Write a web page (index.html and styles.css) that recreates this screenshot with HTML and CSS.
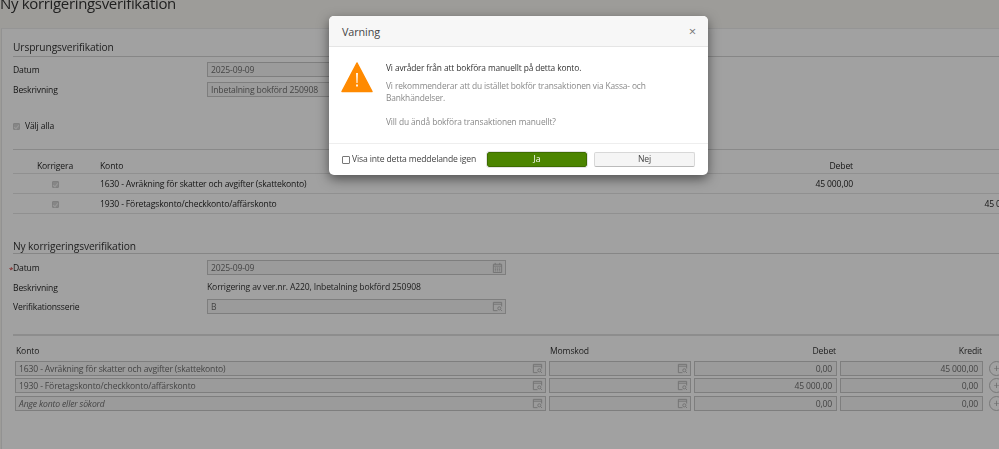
FILE: index.html
```html
<!DOCTYPE html>
<html lang="sv">
<head>
<meta charset="utf-8">
<title>Ny korrigeringsverifikation</title>
<link rel="stylesheet" href="styles.css">
</head>
<body>
<svg class="defs" width="0" height="0" aria-hidden="true">
  <symbol id="cal" viewBox="0 0 12 12"><path d="M1.5 2.5h9v9h-9zM1.5 4.5h9M3.5 1v2M8.5 1v2M3 6.5h1.500M5.300 6.500h1.500M7.600 6.500H9M3 8h1.500M5.300 8h1.500M7.600 8H9M3 9.700h1.500M5.300 9.700h1.500M7.600 9.700H9" fill="none" stroke="currentColor"/></symbol>
  <symbol id="look" viewBox="0 0 12 12"><path d="M6 10.500H1.500v-9h9V6M1.500 3.500h9" fill="none" stroke="currentColor"/><circle cx="8" cy="8" r="1.700" fill="none" stroke="currentColor"/><path d="M9.300 9.300l1.600 1.600" stroke="currentColor"/></symbol>
</svg>
<div class="page">
  <h1 class="title">Ny korrigeringsverifikation</h1>
  <main class="panel">
    <h2 class="heading first">Ursprungsverifikation</h2>
    <div class="form-row"><span class="label">Datum</span><span class="field w-date">2025-09-09</span></div>
    <div class="form-row"><span class="label">Beskrivning</span><span class="field w-date">Inbetalning bokförd 250908</span></div>
    <div class="check-all"><span class="check"></span>Välj alla</div>
    <div class="orig-table">
      <div class="orig-row head"><span class="c-center">Korrigera</span><span>Konto</span><span class="c-right">Debet</span><span class="c-right">Kredit</span></div>
      <div class="orig-row"><span class="c-center"><span class="check"></span></span><span>1630 - Avräkning för skatter och avgifter (skattekonto)</span><span class="c-right">45 000,00</span><span></span></div>
      <div class="orig-row"><span class="c-center"><span class="check"></span></span><span>1930 - Företagskonto/checkkonto/affärskonto</span><span></span><span class="c-right">45 000,00</span></div>
    </div>
    <h2 class="heading second">Ny korrigeringsverifikation</h2>
    <div class="form-row new"><span class="label"><b class="req">*</b>Datum</span><span class="field w-new">2025-09-09<svg class="ico"><use href="#cal"/></svg></span></div>
    <div class="form-row new"><span class="label">Beskrivning</span><span class="plain">Korrigering av ver.nr. A220, Inbetalning bokförd 250908</span></div>
    <div class="form-row new"><span class="label">Verifikationsserie</span><span class="field w-new">B<svg class="ico"><use href="#look"/></svg></span></div>
    <div class="lines">
      <div class="line-row head"><span class="pad">Konto</span><span class="pad">Momskod</span><span class="c-right">Debet</span><span class="c-right">Kredit</span></div>
      <div class="line-row"><span class="field">1630 - Avräkning för skatter och avgifter (skattekonto)<svg class="ico"><use href="#look"/></svg></span><span class="field"><svg class="ico"><use href="#look"/></svg></span><span class="field num">0,00</span><span class="field num">45 000,00</span><span class="plus">+</span></div>
      <div class="line-row"><span class="field">1930 - Företagskonto/checkkonto/affärskonto<svg class="ico"><use href="#look"/></svg></span><span class="field"><svg class="ico"><use href="#look"/></svg></span><span class="field num">45 000,00</span><span class="field num">0,00</span><span class="plus">+</span></div>
      <div class="line-row"><span class="field hint">Ange konto eller sökord<svg class="ico"><use href="#look"/></svg></span><span class="field"><svg class="ico"><use href="#look"/></svg></span><span class="field num">0,00</span><span class="field num">0,00</span><span class="plus">+</span></div>
    </div>
  </main>
</div>
<div class="backdrop"></div>
<section class="modal">
  <header class="modal-head"><span>Varning</span><span class="close">×</span></header>
  <div class="modal-body">
    <svg class="warn" viewBox="0 0 32 32"><path d="M16 2 L31 30.500 H1 Z" fill="#ff8a00" stroke="#ff8a00" stroke-width="1.500" stroke-linejoin="round"/><path d="M15.100 12h1.800l-.4 10h-1z" fill="#fff"/><rect x="15.100" y="23.500" width="1.800" height="2" fill="#fff"/></svg>
    <div class="msg">
      <p class="lead">Vi avråder från att bokföra manuellt på detta konto.</p>
      <p class="muted">Vi rekommenderar att du istället bokför transaktionen via Kassa- och Bankhändelser.</p>
      <p class="muted last">Vill du ändå bokföra transaktionen manuellt?</p>
    </div>
  </div>
  <footer class="modal-foot">
    <label class="dont"><span class="box"></span>Visa inte detta meddelande igen</label>
    <button class="btn yes">Ja</button>
    <button class="btn no">Nej</button>
  </footer>
</section>
</body>
</html>
```
FILE: styles.css
```css
* { box-sizing: border-box; }
html, body { margin: 0; height: 100%; overflow: hidden; }
body { font: 8.6px/13px "Open Sans", sans-serif; letter-spacing: -0.15px; color: #262626; background: #f9f8f3; }
.defs { position: absolute; }
.page { height: 449px; overflow: hidden; filter: blur(0.35px); }
.title { margin: 0; height: 28px; font-size: 15px; font-weight: 400; letter-spacing: -0.33px; line-height: 6px; color: #333; white-space: nowrap; }
.panel { width: 1100px; height: 421px; margin-left: 1px; padding: 0 0 0 11px; background: #fff; border-left: 1px solid #e8e8e8; border-top: 1px solid #ececec; }
.heading { margin: 0; width: 1087px; font-size: 10.2px; letter-spacing: -0.1px; font-weight: 400; line-height: 14px; color: #333; border-bottom: 1px solid #d4d4d4; }
.heading.first { padding-top: 11px; height: 28px; }
.heading.second { margin-top: 25px; height: 15px; }
.form-row { display: flex; align-items: center; height: 20px; padding-top: 4px; }
.form-row.new { height: 19.500px; padding-top: 7px; }
.label { width: 194px; position: relative; padding-top: 3px; }
.req { position: absolute; left: -4px; font-size: 8px; color: #c22; font-weight: 400; }
.field { position: relative; display: block; height: 15px; padding: 1px 4px 0 3px; line-height: 13px; background: #f5f5f5; border: 1px solid #c8c8c8; color: #6e6e6e; white-space: nowrap; overflow: hidden; }
.w-date { width: 298px; }
.w-new { width: 299px; }
.plain { color: #333; padding-top: 1px; }
.ico { position: absolute; right: 2px; top: 1px; width: 11px; height: 11px; color: #b5b5b5; }
.check-all { display: flex; align-items: center; gap: 5px; height: 16px; margin-top: 21px; }
.check { position: relative; display: inline-block; vertical-align: middle; width: 7px; height: 7px; background: #d4d4d4; border: 1px solid #cbcbcb; border-radius: 1px; }
.check::after { content: ""; position: absolute; left: 1px; top: 0; width: 2px; height: 4px; border: solid #f2f2f2; border-width: 0 1px 1px 0; transform: rotate(40deg); }
.orig-table { width: 1087px; margin-top: 15px; border-top: 1px solid #d9d9d9; }
.orig-row { display: grid; grid-template-columns: 72px 600px 168px 169px; align-items: center; height: 20px; padding-top: 2px; border-bottom: 1px solid #e4e4e4; white-space: nowrap; }
.orig-row.head { height: 24px; padding-top: 9px; }
.orig-row span:nth-child(2) { padding-left: 15px; }
.c-center { text-align: center; padding-left: 12px; }
.c-right { text-align: right; }
.lines { width: 1087px; margin-top: 21px; border-top: 2px solid #e0e0e0; padding-top: 7px; padding-left: 2px; }
.line-row { display: grid; grid-template-columns: 531px 142px 143px 143px 18px; column-gap: 3px; height: 17.500px; align-items: start; }
.line-row.head { height: 18px; padding-top: 2px; grid-template-columns: 531px 142px 143px 143px; color: #333; align-items: start; }
.line-row .c-right { padding-right: 1px; }
.pad { padding-left: 1px; }
.num { text-align: right; }
.hint { font-style: italic; }
.plus { width: 15px; height: 15px; margin-left: 3px; border: 1px solid #bdbdbd; border-radius: 50%; text-align: center; font-size: 11px; line-height: 12px; color: #aaa; }
.backdrop { position: fixed; inset: 0; background: rgba(0, 0, 0, 0.37); }
.modal { position: fixed; left: 329px; top: 16px; width: 379px; height: 159px; background: #fff; border-radius: 5px; overflow: hidden; box-shadow: 0 4px 12px rgba(0, 0, 0, 0.5); filter: blur(0.3px); }
.modal-head { display: flex; justify-content: space-between; align-items: center; height: 31px; padding: 0 12px 0 13px; background: #f7f7f7; border-bottom: 1px solid #e5e5e5; font-size: 10.8px; letter-spacing: -0.1px; color: #444; }
.close { font-size: 13px; color: #777; }
.modal-body { display: flex; height: 96px; padding: 14px 0 0 12px; }
.warn { width: 32px; height: 32px; flex: none; }
.msg { margin-left: 13px; width: 280px; font-size: 8.4px; letter-spacing: -0.12px; line-height: 12px; }
.msg p { margin: 0; }
.lead { color: #333; padding-top: 1px; }
.muted { color: #888; margin-top: 6px !important; }
.muted.last { margin-top: 12px !important; }
.modal-foot { display: flex; align-items: center; height: 32px; padding: 0 13px; border-top: 1px solid #eee; }
.dont { display: flex; align-items: center; width: 145px; color: #444; white-space: nowrap; }
.box { flex: none; width: 8px; height: 8px; margin-right: 2px; background: #fff; border: 1px solid #777; border-radius: 1px; }
.btn { height: 15px; padding: 0; font: inherit; letter-spacing: inherit; border-radius: 2px; }
.yes { width: 100px; background: #4c8500; color: #fff; border: 1px solid #3d6c00; outline: 1px solid #e3e3e3; }
.no { width: 101px; margin-left: 7px; background: #f5f5f5; color: #444; border: 1px solid #d8d8d8; border-bottom-color: #bbb; }
```
